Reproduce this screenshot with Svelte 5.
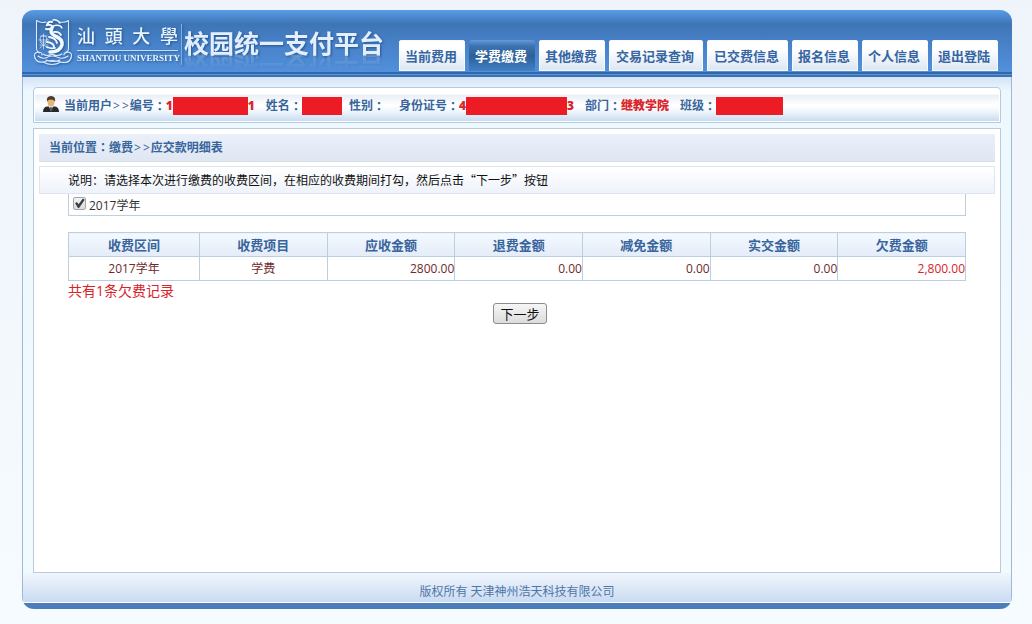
<script>
  const tabs = [
    { label: '当前费用' },
    { label: '学费缴费', active: true },
    { label: '其他缴费' },
    { label: '交易记录查询', wide: true },
    { label: '已交费信息', wide: true },
    { label: '报名信息' },
    { label: '个人信息' },
    { label: '退出登陆' }
  ];

  const columns = ['收费区间', '收费项目', '应收金额', '退费金额', '减免金额', '实交金额', '欠费金额'];
  const rows = [['2017学年', '学费', '2800.00', '0.00', '0.00', '0.00', '2,800.00']];

  let checked = $state(true);
</script>

<div class="page">
  <div class="shell">
    <header>
      <div class="brand">
        <svg class="crest" viewBox="0 0 40 48" width="40" height="48" aria-hidden="true">
          <g fill="none" stroke="#dcecff" stroke-width="1.1" stroke-linecap="round" stroke-linejoin="round">
            <path d="M3.500 2.500 Q8 5.500 13 4 M27 4 Q32 5 35.500 2.500 M3.500 2.500 V31 Q4 34 6.500 35 M35.500 2.500 V31 Q35 34 32.500 35" />
            <path d="M6 22 h10 M8 18 h6 M10.500 16 v15 M7 27 h8 M7 24 l7 6 M14 24 l-7 6" stroke-width=".7" />
            <circle cx="10.500" cy="21" r="3.500" stroke-width=".7" />
            <path d="M2 40 Q0 35 5 34 Q9 34 9 37 M38 40 Q40 35 35 34 Q31 34 31 37" />
            <path d="M2 40 Q4 45 10 44 Q19 41 28 44 Q36 46 38 40 M5 38 Q10 42 15 39 Q19 37 24 39 Q30 42 35 38 M10 36 Q14 39 19 36 Q24 39 29 36 M10 44 Q19 49 28 44 M13 42 Q20 45 27 42" />
          </g>
          <g fill="none" stroke="#f2f9ff" stroke-linecap="round">
            <path d="M19 4 Q15 3 14 7 Q18 6 20 9 Q17 12 13 11" stroke-width="2" />
            <path d="M20 2 Q24 1 27 5 M20 8 Q27 6 29 10" stroke-width="1.500" />
            <path d="M19 10 Q16 15 22 18 Q30 21 29 27 Q27 34 17 34" stroke-width="3.500" />
            <path d="M21 14 Q26 13 28 17 M16 19 Q23 20 24 25 M14 24 Q21 25 21 29 M14 29 Q18 31 22 30" stroke-width="1.800" />
          </g>
        </svg>
        <div class="school">
          <div class="school-zh"><span>汕</span><span>頭</span><span>大</span><span>學</span></div>
          <div class="school-en">SHANTOU UNIVERSITY</div>
        </div>
        <h1>校园统一支付平台</h1>
      </div>
      <nav>
        {#each tabs as tab}
          <a href="#top" class:active={tab.active} class:wide={tab.wide}>{tab.label}</a>
        {/each}
      </nav>
    </header>

    <main>
      <section class="user">
        <svg class="person" viewBox="0 0 16 16" width="16" height="16" aria-hidden="true">
          <path d="M0 16 Q0 11 4 10.500 L12 10.500 Q16 11 16 16 Z" fill="#26282c" />
          <path d="M5.500 9.500 h5 L8 15 Z" fill="#f4f4f4" />
          <path d="M7.300 11 h1.400 l.6 3 L8 15.500 6.700 14 Z" fill="#565b62" />
          <ellipse cx="8" cy="6" rx="3.500" ry="4.500" fill="#e5b47b" />
          <path d="M4 6 Q3 0 8 0 Q13 0 12 6 Q11.500 3.500 8 3.500 Q4.500 3.500 4 6" fill="#4d3926" />
        </svg>
        <div class="field id">
          当前用户<span class="chevrons"><span>&gt;</span><span>&gt;</span></span>编号<span class="colon">：</span><b>1</b><i class="mask w-id"></i><b>1</b>
        </div>
        <div class="field">姓名<span class="colon">：</span><i class="mask w-name"></i></div>
        <div class="field sex">性别<span class="colon">：</span></div>
        <div class="field">身份证号<span class="colon">：</span><b>4</b><i class="mask w-card"></i><b>3</b></div>
        <div class="field">部门<span class="colon">：</span><b>继教学院</b></div>
        <div class="field">班级<span class="colon">：</span><i class="mask w-class"></i></div>
      </section>

      <section class="panel">
        <div class="crumb">
          当前位置<span class="colon">：</span>缴费<span class="chevrons"><span>&gt;</span><span>&gt;</span></span>应交款明细表
        </div>
        <p class="note">说明：请选择本次进行缴费的收费区间，在相应的收费期间打勾，然后点击“下一步”按钮</p>
        <div class="content">
          <div class="term">
            <input id="term-2017" type="checkbox" bind:checked />
            <label for="term-2017">2017学年</label>
          </div>
          <table>
            <thead>
              <tr>
                {#each columns as column}
                  <th scope="col">{column}</th>
                {/each}
              </tr>
            </thead>
            <tbody>
              {#each rows as row}
                <tr>
                  {#each row as cell, i}
                    <td class:amount={i > 1} class:due={i === 6}>{cell}</td>
                  {/each}
                </tr>
              {/each}
            </tbody>
          </table>
          <p class="total">共有1条欠费记录</p>
          <div class="actions"><button type="button">下一步</button></div>
        </div>
      </section>
    </main>

    <footer>版权所有 天津神州浩天科技有限公司</footer>
  </div>
</div>

<style>
  :global(body) {
    margin: 0;
    background: linear-gradient(#eff4fb, #f5fbfe);
  }

  .page {
    box-sizing: border-box;
    min-height: 100vh;
    padding: 10px 20px 15px 22px;
    display: flex;
    font: 12px/18px "Open Sans", "Noto Sans CJK SC", sans-serif;
    color: #333;
  }

  .shell {
    flex: 1;
    min-width: 0;
    display: flex;
    flex-direction: column;
    box-sizing: border-box;
    border: 1px solid #9fb9d3;
    border-top: 0;
    border-bottom: 6px solid #4b7dba;
    border-radius: 12px;
    background: #f0f8fe;
  }

  header {
    display: flex;
    justify-content: space-between;
    align-items: flex-end;
    box-sizing: border-box;
    height: 67px;
    margin: 0 -1px;
    padding: 0 14px 5px 11px;
    border-radius: 12px 12px 0 0;
    background:
      linear-gradient(#2f69ab 0 2px, #5c94d4 2px 3px, #3a72b4 3px 5px) bottom / 100% 5px no-repeat,
      linear-gradient(#5a9de7 0, #4e8bd0 6px, #3e75b5 14px, #4680c7 32px, #5290db 61px);
  }

  .brand {
    display: flex;
    align-items: flex-start;
    height: 54px;
    filter: drop-shadow(1px 1px 1px #24558f);
  }

  .crest {
    flex: none;
  }

  .school {
    display: flex;
    flex-direction: column;
    width: 104px;
    margin: 6px 0 0 4px;
    border-right: 1px solid #7eafe6;
    color: #e9f4ff;
  }

  .school-zh {
    display: flex;
    justify-content: space-between;
    width: 101px;
    padding-bottom: 4px;
    font: 500 18px/22px "Noto Sans CJK TC", sans-serif;
    border-bottom: 1px solid #c4dcf5;
  }

  .school-en {
    font: bold 9px/14px "Liberation Serif", serif;
    white-space: nowrap;
  }

  h1 {
    margin: 8px 0 0 2px;
    font: bold 25px/32px "Noto Sans CJK SC", sans-serif;
    color: #e3efff;
    white-space: nowrap;
    -webkit-box-reflect: below -8px linear-gradient(transparent 40%, rgba(255, 255, 255, 0.3));
  }

  nav {
    display: flex;
    gap: 4px;
    padding-bottom: 1px;
  }

  nav a {
    padding: 0 8px 0 6px;
    border-radius: 3px 3px 0 0;
    font: bold 13px/31px "Noto Sans CJK SC", sans-serif;
    color: #3565a2;
    text-decoration: none;
    white-space: nowrap;
    background: linear-gradient(#fff 30%, #dbe5f2);
    box-shadow: inset 0 0 0 1px #f6faff;
  }

  nav a.wide {
    padding: 0 9px 0 7px;
  }

  nav a.active {
    color: #fff;
    background: linear-gradient(#6699d5 0, #3c73b0 6px, #2d6098 16px, #4180c5);
    box-shadow: none;
  }

  main {
    flex: 1;
    display: flex;
    flex-direction: column;
    gap: 5px;
    padding: 10px 10px 0;
    background: linear-gradient(#d3e2f6, #edf7fe 14px, #f0faff);
  }

  .user {
    display: flex;
    align-items: center;
    gap: 11px;
    box-sizing: border-box;
    min-height: 36px;
    padding: 2px 9px 0;
    border: 1px solid #b5cbdd;
    border-radius: 4px 4px 0 0;
    background: linear-gradient(#fff 0, #fff 6px, #e9eff5 7px, #fff 17px, #f4f9fd 22px, #c9dcf0 33px);
    box-shadow: inset 0 0 0 1px #fff;
    font-weight: bold;
    color: #37659c;
  }

  .person {
    flex: none;
    margin-bottom: 4px;
  }

  .field {
    display: flex;
    align-items: center;
    white-space: nowrap;
  }

  .id {
    margin-left: -6px;
  }

  .sex {
    margin: 0 3px 0 -4px;
  }

  .field b {
    color: #d9252b;
  }

  .mask {
    height: 18px;
    background: #ed1c24;
  }

  .w-id { width: 75px; }
  .w-name { width: 40px; }
  .w-card { width: 101px; }
  .w-class { width: 67px; }

  .colon {
    font-family: "Noto Sans CJK TC", sans-serif;
  }

  .chevrons {
    display: inline-flex;
    gap: 2px;
    padding: 0 1px;
    font-weight: normal;
  }

  .panel {
    flex: 1;
    padding: 5px 5px 10px;
    border: 1px solid #b9ccdd;
    background: #fff;
  }

  .crumb {
    padding: 4px 10px;
    border-bottom: 1px solid #d3dde6;
    background: linear-gradient(#eaf0fa, #dfe7f2);
    font-weight: bold;
    color: #37659c;
  }

  .note {
    margin: 4px 0 0;
    padding: 4px 28px;
    border: 1px solid #dfe5ee;
    background: linear-gradient(#fff, #eef2fa);
    font-family: "Noto Sans CJK SC", sans-serif;
    color: #111;
  }

  .content {
    margin: 0 29px;
  }

  .term {
    display: flex;
    align-items: flex-start;
    gap: 3px;
    padding: 3px 4px 0;
    border: 1px solid #bdcfdc;
    border-top: 0;
  }

  .term label {
    line-height: 18px;
  }

  input {
    appearance: none;
    box-sizing: border-box;
    width: 13px;
    height: 13px;
    margin: 0;
    border: 1px solid #a3a7ad;
    border-radius: 2px;
    background: linear-gradient(#f2f2f2, #dcdcdc);
  }

  input:checked::after {
    content: "";
    display: block;
    height: 11px;
    background: #3c4046;
    clip-path: polygon(10% 48%, 26% 36%, 42% 56%, 80% 4%, 98% 16%, 46% 90%, 36% 90%);
  }

  table {
    width: 100%;
    margin-top: 16px;
    border-collapse: collapse;
    table-layout: fixed;
  }

  th,
  td {
    height: 23px;
    padding: 0;
    border: 1px solid #bccfe0;
    text-align: center;
    color: #70292b;
  }

  th {
    font: bold 13px/18px "Noto Sans CJK SC", sans-serif;
    color: #37659c;
    background: linear-gradient(#f4f9fe, #e4ecf8);
  }

  th:first-child {
    width: 130px;
  }

  td.amount {
    text-align: right;
  }

  td.due {
    color: #d8232a;
  }

  .total {
    margin: 0;
    font-size: 14px;
    line-height: 20px;
    color: #d8232a;
  }

  .actions {
    display: flex;
    justify-content: center;
    padding: 2px 0 0 6px;
  }

  button {
    padding: 0 6px;
    border: 1px solid #8c8c8c;
    border-radius: 3px;
    font: 13px/19px "Noto Sans CJK SC", sans-serif;
    color: #111;
    background: linear-gradient(#f6f6f6, #dcdcdc);
  }

  footer {
    padding: 10px 0 1px;
    border-bottom: 1px solid #fff;
    text-align: center;
    color: #4e76a8;
    background: linear-gradient(#f1f6fd, #c9dbf1);
  }
</style>
